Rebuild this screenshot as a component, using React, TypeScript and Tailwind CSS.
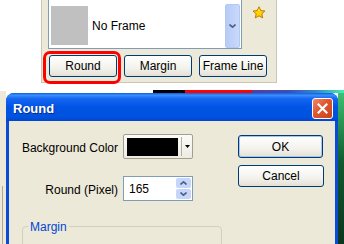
import React from 'react';

const beige = 'bg-[#ECE9D8]';

const XpButton = ({ label, className = '' }: { label: string; className?: string }) => (
  <div
    className={`flex items-center justify-center border border-[#003C74] rounded-[3px] bg-[linear-gradient(#FFFFFF,#F3F2EC_60%,#E3E0D6)] text-[12px] text-black ${className}`}
  >
    {label}
  </div>
);

const Star = () => (
  <svg width="14" height="13" viewBox="0 0 14 13">
    <path
      d="M7 0.8 L8.8 4.6 L12.9 5 L9.8 7.8 L10.7 11.9 L7 9.8 L3.3 11.9 L4.2 7.8 L1.1 5 L5.2 4.6 Z"
      fill="#FFD400"
      stroke="#C07800"
      strokeWidth="1"
      strokeLinejoin="round"
    />
    <path d="M6 4.5 L7 2.8 L7.6 4.8 Z" fill="#FFF9C0" />
  </svg>
);

const Chevron = ({ up = false }: { up?: boolean }) => (
  <svg width="7" height="4" viewBox="0 0 7 4" className={up ? 'rotate-180' : ''}>
    <path d="M0.5 0.5 L3.5 3.2 L6.5 0.5" fill="none" stroke="#4D6185" strokeWidth="1.6" />
  </svg>
);

const TopPanel = () => (
  <div className="flex h-[85px]">
    <div className="w-[41px] bg-white" />
    <div className={`relative w-[236px] h-[83px] ${beige} border-l border-r border-b border-[#C9C6B8]`}>
      <div className="flex items-start">
        <div className="ml-[6px] w-[194px] h-[49px] bg-white border-l border-r border-b border-[#7F9DB9] flex items-start">
          <div className="mt-[6px] ml-[2px] w-[37px] h-[39px] bg-[#C0C0C0]" />
          <div className="ml-[4px] mt-[19px] text-[12px] text-black leading-[14px]">No Frame</div>
          <div className="ml-auto mr-[1px] mt-[4px] w-[15px] h-[44px] rounded-[2px] bg-[linear-gradient(90deg,#B6CBF7,#C9D9FB)] border border-[#B3C8F2] flex items-center justify-center">
            <Chevron />
          </div>
        </div>
        <div className="ml-[10px] mt-[6px]">
          <Star />
        </div>
      </div>
      <div className="flex gap-[7px] ml-[7px] mt-[6px]">
        <XpButton label="Round" className="w-[68px] h-[22px]" />
        <XpButton label="Margin" className="w-[68px] h-[22px]" />
        <XpButton label="Frame Line" className="w-[68px] h-[22px]" />
      </div>
      <div className="absolute left-[1px] top-[51px] w-[78px] h-[33px] border-[3px] border-[#FF0000] rounded-[7px]" />
    </div>
  </div>
);

const Strip = () => (
  <div className="flex h-[10px]">
    <div className="w-[6px] flex flex-col">
      <div className="h-[8px] bg-white" />
      <div className={`flex-1 ${beige}`} />
    </div>
    <div className="flex flex-col flex-1">
      <div className="h-[7px] bg-white" />
      <div className="flex h-[3px]">
        <div className="w-[147px] bg-white" />
        <div className="w-[32px] bg-black" />
        <div className="w-[67px] bg-[#FF0000]" />
        <div className="flex-1 bg-[linear-gradient(90deg,#5A3C9C,#3C4CB8_40%,#2E8CC8_70%,#40F0B0)]" />
      </div>
    </div>
  </div>
);

const ColorPicker = () => (
  <div className="w-[70px] h-[25px] border border-[#A19F8E] rounded-[2px] bg-[linear-gradient(#FBFBF8,#EDEBE2)] flex items-center">
    <div className="ml-[3px] w-[51px] h-[18px] bg-black" />
    <div className="ml-[3px] w-px h-[19px] bg-[#B5B2A4]" />
    <div className="flex-1 flex justify-center">
      <svg width="5" height="3" viewBox="0 0 5 3">
        <path d="M0 0 H5 L2.5 3 Z" fill="#000" />
      </svg>
    </div>
  </div>
);

const SpinBox = () => (
  <div className="w-[70px] h-[25px] border border-[#7F9DB9] bg-white flex items-center">
    <span className="ml-[5px] text-[12px] text-black">165</span>
    <div className="ml-auto mr-[1px] flex flex-col gap-px w-[15px] h-[21px]">
      <div className="flex-1 rounded-[2px] bg-[#C6D6FA] flex items-center justify-center">
        <Chevron up />
      </div>
      <div className="flex-1 rounded-[2px] bg-[#C6D6FA] flex items-center justify-center">
        <Chevron />
      </div>
    </div>
  </div>
);

const Dialog = () => (
  <div className="w-[332px] flex flex-col rounded-t-[8px] bg-[#0A4BD8] overflow-hidden">
    <div className="h-[28px] flex items-start bg-[linear-gradient(#0A5EEA,#3D8FFA_8%,#1566F2_20%,#0054E3_50%,#0052DF_85%,#0046D0)]">
      <span className="ml-[7px] mt-[8px] text-[13px] font-bold text-white leading-[16px] [text-shadow:1px_1px_0_#0A2A8A]">
        Round
      </span>
      <div className="ml-auto mr-[5px] mt-[5px] w-[21px] h-[21px] rounded-[3px] border border-white bg-[linear-gradient(135deg,#F08A6A,#E0552E_45%,#C8401C)] flex items-center justify-center">
        <svg width="11" height="11" viewBox="0 0 11 11">
          <path d="M1.5 1.5 L9.5 9.5 M9.5 1.5 L1.5 9.5" stroke="#fff" strokeWidth="2.2" strokeLinecap="square" />
        </svg>
      </div>
    </div>
    <div className={`mx-[3px] flex-1 ${beige} text-[12px] text-black`}>
      <div className="flex pt-[13px]">
        <div className="ml-[12px] grid grid-cols-[97px_70px] gap-x-[5px] gap-y-[17px] items-center">
          <span className="pt-[2px] text-right whitespace-nowrap">Background Color</span>
          <ColorPicker />
          <span className="pt-[2px] text-right whitespace-nowrap">Round (Pixel)</span>
          <SpinBox />
        </div>
        <div className="ml-[45px] mt-[1px] flex flex-col gap-[7px]">
          <XpButton label="OK" className="w-[85px] h-[23px] border-[#003C74] shadow-[inset_0_0_0_1px_#A8C4F0]" />
          <XpButton label="Cancel" className="w-[86px] h-[22px]" />
        </div>
      </div>
      <div className="relative ml-[13px] mt-[25px] w-[200px] h-[40px] border border-[#D0D0BF] rounded-[4px]">
        <span className={`absolute -top-[8px] left-[5px] px-[2px] ${beige} text-[#0046D5] leading-[16px]`}>Margin</span>
      </div>
    </div>
  </div>
);

export default function App() {
  return (
    <div className="w-[344px] h-[244px] overflow-hidden bg-white flex flex-col font-['Liberation_Sans',Arial,sans-serif]">
      <TopPanel />
      <Strip />
      <div className="flex flex-1">
        <div className={`w-[6px] ${beige} flex flex-col`}>
          <div className="h-[93px]" />
          <div className="ml-[2px] flex-1 border-l border-[#ACA899]" />
        </div>
        <Dialog />
        <div className="flex-1 bg-[linear-gradient(#3CC070,#0F5A30_40%,#0A2C1C)]" />
      </div>
    </div>
  );
}
